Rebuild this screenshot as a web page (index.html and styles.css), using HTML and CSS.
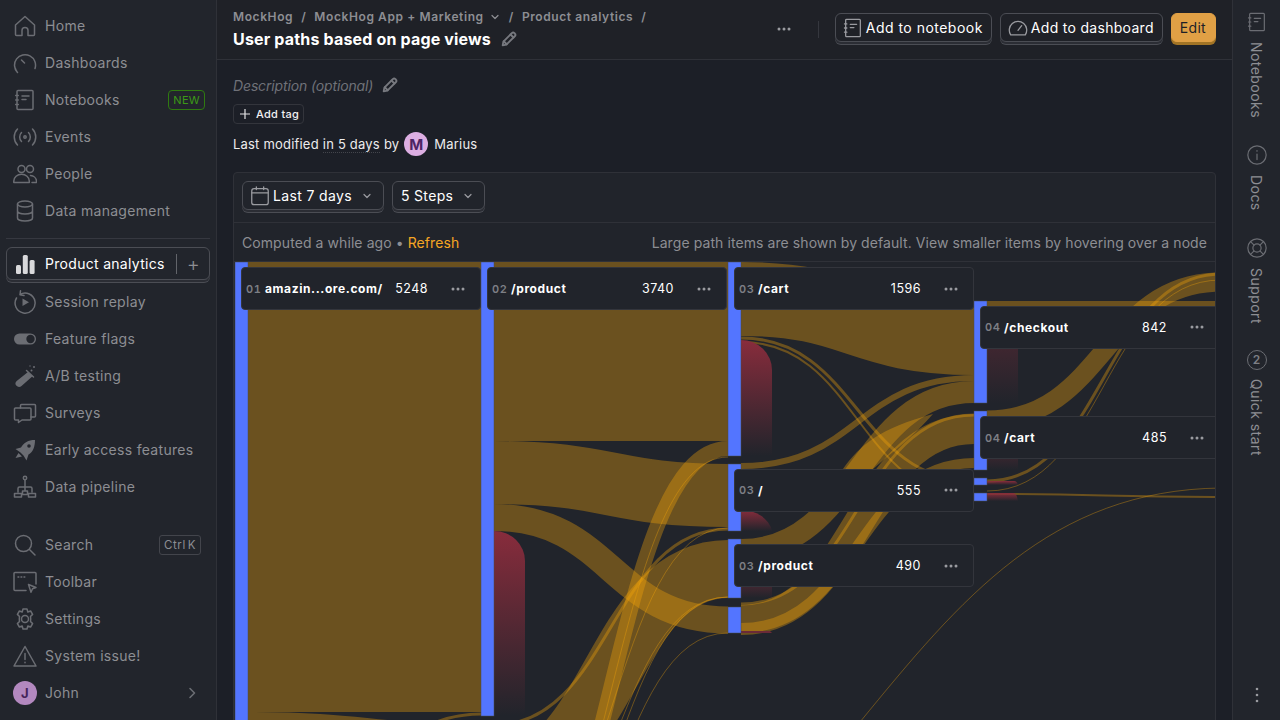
FILE: index.html
```html
<!DOCTYPE html>
<html lang="en">
  <head>
    <meta charset="UTF-8" />
    <title>User paths based on page views</title>
    <link rel="stylesheet" href="styles.css">
  </head>
  <body>
    <svg class="sprite" width="0" height="0">
      <symbol id="i-notebook" viewBox="0 0 24 24">
        <path d="M5 2.500h14a1 1 0 0 1 1 1v17a1 1 0 0 1-1 1H5a1 1 0 0 1-1-1v-17a1 1 0 0 1 1-1z" />
        <path d="M2.700 7.500h2.600M2.700 12h2.600M2.700 16.500h2.600M9 8h7M9 11.500h4" />
      </symbol>
      <symbol id="i-pencil" viewBox="0 0 24 24">
        <path d="M3.500 20.500l1-5L16 4a2 2 0 0 1 3 0l1 1a2 2 0 0 1 0 3L8.500 19.500z" />
        <path d="M14 6l4 4M5 15l4 4" />
      </symbol>
      <symbol id="i-dots" viewBox="0 0 14 14">
        <circle cx="2" cy="7" r="1.500" />
        <circle cx="7" cy="7" r="1.500" />
        <circle cx="12" cy="7" r="1.500" />
      </symbol>
      <symbol id="i-chevron" viewBox="0 0 12 12">
        <path d="M3 4.500 6 7.500 9 4.500" />
      </symbol>
    </svg>

    <div class="app">
      <aside class="sidebar">
        <nav class="nav-group">
          <a class="nav-item">
            <svg class="nav-icon" viewBox="0 0 24 24"><path d="M2.500 11 12 2.500l9.500 8.500v9.500a1 1 0 0 1-1 1H15v-5a3 3 0 0 0-6 0v5H3.500a1 1 0 0 1-1-1z" /></svg>
            <span>Home</span>
          </a>
          <a class="nav-item">
            <svg class="nav-icon" viewBox="0 0 24 24"><path d="M4.500 21.500A10.500 10.500 0 1 1 22 17.500M2.400 17.500a10.500 10.500 0 0 0 1.400 3M8.500 9l3 3" /></svg>
            <span>Dashboards</span>
          </a>
          <a class="nav-item">
            <svg class="nav-icon"><use href="#i-notebook" /></svg>
            <span>Notebooks</span>
            <span class="badge-new">NEW</span>
          </a>
          <a class="nav-item">
            <svg class="nav-icon" viewBox="0 0 24 24"><circle cx="12" cy="12" r="1.200" /><path d="M8.500 7.500a6.500 6.500 0 0 0 0 9M15.500 7.500a6.500 6.500 0 0 1 0 9M4.500 4a11.500 11.500 0 0 0 0 16M19.500 4a11.500 11.500 0 0 1 0 16" /></svg>
            <span>Events</span>
          </a>
          <a class="nav-item">
            <svg class="nav-icon" viewBox="0 0 24 24"><circle cx="8.500" cy="7" r="3.500" /><circle cx="17" cy="7" r="3.500" /><path d="M0.800 20.500v-1.500a7 6 0 0 1 15.500 0v1.500zM17.500 13.500a6.500 6 0 0 1 6 5.500v1.500H19" /></svg>
            <span>People</span>
          </a>
          <a class="nav-item">
            <svg class="nav-icon" viewBox="0 0 24 24"><ellipse cx="12" cy="5" rx="7.500" ry="3" /><path d="M4.500 5v14c0 1.700 3.400 3 7.500 3s7.500-1.300 7.500-3V5M4.500 12c0 1.700 3.400 3 7.500 3s7.500-1.300 7.500-3" /></svg>
            <span>Data management</span>
          </a>
        </nav>

        <div class="nav-divider"></div>

        <nav class="nav-group">
          <a class="nav-item nav-item-active">
            <svg class="nav-icon nav-icon-solid" viewBox="0 0 24 24"><rect x="3" y="13" width="5" height="9" rx="1.500" /><rect x="9.800" y="3" width="5" height="19" rx="1.500" /><rect x="16.600" y="8" width="5" height="14" rx="1.500" /></svg>
            <span>Product analytics</span>
            <span class="nav-add">+</span>
          </a>
          <a class="nav-item">
            <svg class="nav-icon" viewBox="0 0 24 24"><path d="M7 4.500A10 10 0 1 1 3.500 8M7.500 0.800 7 4.800l4 .7" /><path class="nav-fill" d="M9.500 8.500v7.500l6.500-3.800z" /></svg>
            <span>Session replay</span>
          </a>
          <a class="nav-item">
            <svg class="nav-icon" viewBox="0 0 24 24"><rect class="nav-fill" x="1" y="6.500" width="22" height="11" rx="5.500" /><circle class="nav-knob" cx="17.500" cy="12" r="4.200" /></svg>
            <span>Feature flags</span>
          </a>
          <a class="nav-item">
            <svg class="nav-icon" viewBox="0 0 24 24"><path class="nav-fill" d="M15 8l4.500 4.200L8.500 22a3.400 3.400 0 0 1-5-.2 3.400 3.400 0 0 1 .2-4.800z" /><path d="M13.500 6.500l7 6.500" /><circle class="nav-fill" cx="18.500" cy="6.500" r="1" /><circle class="nav-fill" cx="21" cy="3" r="1" /><circle class="nav-fill" cx="17" cy="2" r="0.700" /></svg>
            <span>A/B testing</span>
          </a>
          <a class="nav-item">
            <svg class="nav-icon" viewBox="0 0 24 24"><path d="M7.500 7V4.500a1 1 0 0 1 1-1h13a1 1 0 0 1 1 1V15a1 1 0 0 1-1 1H18" /><path d="M2.500 7h14.500a1 1 0 0 1 1 1v10a1 1 0 0 1-1 1H9l-3.500 2.500V19h-3a1 1 0 0 1-1-1V8a1 1 0 0 1 1-1z" /></svg>
            <span>Surveys</span>
          </a>
          <a class="nav-item">
            <svg class="nav-icon" viewBox="0 0 24 24"><path class="nav-fill" d="M22 2c-7 0-11 2.500-14 7.500l-5.500 1.500 5 3.500 3 3 3 5 2-6C20 14 22 9 22 2zM2.500 20l3-5 3.500 3.500z" /><circle class="nav-knob" cx="16" cy="8" r="1.800" /></svg>
            <span>Early access features</span>
          </a>
          <a class="nav-item">
            <svg class="nav-icon" viewBox="0 0 24 24"><circle cx="12" cy="3" r="1.700" /><path d="M12 4.700V12M5 17v-3.500a1.500 1.500 0 0 1 1.500-1.500h11a1.500 1.500 0 0 1 1.500 1.500V17M12 12v4M9.500 16h5v3.500h-5zM1.500 18.500h7V22h-7zM15.500 18.500h7V22h-7z" /></svg>
            <span>Data pipeline</span>
          </a>
        </nav>

        <nav class="nav-group nav-group-bottom">
          <a class="nav-item">
            <svg class="nav-icon" viewBox="0 0 24 24"><circle cx="10.500" cy="10.500" r="8" /><path d="M16.500 16.500 22 22" /></svg>
            <span>Search</span>
            <kbd class="kbd">Ctrl K</kbd>
          </a>
          <a class="nav-item">
            <svg class="nav-icon" viewBox="0 0 24 24"><path d="M13 20.500H2a1 1 0 0 1-1-1V3.500a1 1 0 0 1 1-1h20a1 1 0 0 1 1 1V14" /><path d="M5 7h.8M8 7h.8M11 7h.8" /><path d="M15.500 14.500l7.500 3-3.500 1.300-1.500 3.500z" /></svg>
            <span>Toolbar</span>
          </a>
          <a class="nav-item">
            <svg class="nav-icon" viewBox="0 0 24 24"><circle cx="12" cy="12" r="3.500" /><path d="M10 2h4l.8 3 2.800-1 2 3.400L17.500 9.500l.2 2.500-.2 2.500 2.100 2.100-2 3.400-2.800-1L14 22h-4l-.8-3-2.800 1-2-3.400 2.100-2.100-.2-2.500.2-2.500-2.100-2.100 2-3.400 2.800 1z" /></svg>
            <span>Settings</span>
          </a>
          <a class="nav-item">
            <svg class="nav-icon" viewBox="0 0 24 24"><path d="M12 2.500 23 22H1zM12 9.500v6M12 18.200v.6" /></svg>
            <span>System issue!</span>
          </a>
          <a class="nav-item">
            <span class="avatar avatar-john">J</span>
            <span>John</span>
            <svg class="nav-chevron" viewBox="0 0 12 12"><path d="M4 1.500 8.500 6 4 10.500" /></svg>
          </a>
        </nav>
      </aside>

      <main class="main">
        <header class="page-header">
          <div class="header-left">
            <div class="breadcrumbs">
              <span>MockHog</span>
              <span class="crumb-sep">/</span>
              <span>MockHog App + Marketing</span>
              <svg class="crumb-chevron"><use href="#i-chevron" /></svg>
              <span class="crumb-sep">/</span>
              <span>Product analytics</span>
              <span class="crumb-sep">/</span>
            </div>
            <h1 class="page-title">
              User paths based on page views
              <svg class="pencil"><use href="#i-pencil" /></svg>
            </h1>
          </div>
          <div class="header-actions">
            <svg class="dots header-dots"><use href="#i-dots" /></svg>
            <span class="header-divider"></span>
            <button class="btn btn-notebook">
              <svg class="btn-icon"><use href="#i-notebook" /></svg>
              Add to notebook
            </button>
            <button class="btn">
              <svg class="btn-icon" viewBox="0 0 24 24"><path d="M4 19.500a9.500 9.500 0 1 1 16 0zM12 14.500l4-5" /></svg>
              Add to dashboard
            </button>
            <button class="btn btn-primary">Edit</button>
          </div>
        </header>

        <section class="content">
          <p class="description">
            Description (optional)
            <svg class="pencil"><use href="#i-pencil" /></svg>
          </p>
          <button class="tag-btn">
            <svg class="tag-plus" viewBox="0 0 12 12"><path d="M6 1v10M1 6h10" /></svg>
            Add tag
          </button>
          <p class="modified">
            Last modified <span class="dotted">in 5 days</span> by
            <span class="avatar avatar-marius">M</span>
            <span class="modified-name">Marius</span>
          </p>

          <div class="card">
            <div class="filters">
              <button class="btn btn-filter">
                <svg class="btn-icon" viewBox="0 0 24 24"><rect x="3" y="4" width="18" height="17.500" rx="2.500" /><path d="M3 8.500h18M8 2v3M16 2v3" /></svg>
                Last 7 days
                <svg class="filter-chevron"><use href="#i-chevron" /></svg>
              </button>
              <button class="btn btn-filter btn-plain">
                5 Steps
                <svg class="filter-chevron"><use href="#i-chevron" /></svg>
              </button>
            </div>
            <div class="status-row">
              <span>Computed a while ago • <a class="refresh">Refresh</a></span>
              <span>Large path items are shown by default. View smaller items by hovering over a node</span>
            </div>

            <div class="chart">
              <svg class="paths" width="981" height="500" viewBox="234 262 981 500">
                <defs>
                  <linearGradient id="drop" x1="0" y1="0" x2="0" y2="1">
                    <stop offset="0" stop-color="#882c3c" />
                    <stop offset="1" stop-color="#882c3c" stop-opacity="0" />
                  </linearGradient>
                </defs>

                <!-- step 1 to 2 -->
                <path class="flow" stroke-width="450" d="M248,487H481" />
                <path class="flow" stroke-width="100" d="M248,762C364.500,762 364.500,774 481,774" />
                <path class="flow" stroke-width="3" d="M248,850C364.500,850 364.500,714 481,714" />

                <!-- step 2 to 3 -->
                <path class="flow" stroke-width="179" d="M494,351.500H728" />
                <path class="flow" stroke-width="63" d="M494,472.500C611,472.500 611,495.500 728,495.500" />
                <path class="flow" stroke-width="27" d="M494,517.500C611,517.500 611,620 728,620" />
                <path class="flow" stroke-width="58" d="M494,777C611,777 611,569 728,569" />
                <path class="flow" stroke-width="15" d="M494,925C611,925 611,448.500 728,448.500" />
                <path class="flow" stroke-width="3" d="M494,725C611,725 611,529 728,529" />
                <path class="flow" stroke-width="1" d="M494,890C611,890 611,528 728,528" />
                <path class="flow" stroke-width="1" d="M494,897C611,897 611,597 728,597" />
                <path class="flow" stroke-width="1" d="M494,932C611,932 611,597 728,597" />
                <path class="flow" stroke-width="1" d="M494,941C611,941 611,633 728,633" />
                <path class="flow" stroke-width="1" d="M494,925C611,925 611,457 728,457" />

                <!-- step 3 to 4 -->
                <path class="flow" stroke-width="74" d="M741,299C857.500,299 857.500,338 974,338" />
                <path class="flow" stroke-width="3" d="M741,338C857.500,338 857.500,481 974,481" />
                <path class="flow" stroke-width="2" d="M741,342C857.500,342 857.500,497 974,497" />
                <path class="flow" stroke-width="6" d="M741,466C857.500,466 857.500,378 974,378" />
                <path class="flow" stroke-width="22" d="M741,550C857.500,550 857.500,392 974,392" />
                <path class="flow-fill" d="M843,469C860,445 880,428 933,414C915,435 895,450 873,469Z" />
                <path class="flow" stroke-width="30" d="M741,620C857.500,620 857.500,429 974,429" />
                <path class="flow" stroke-width="3" d="M741,604C857.500,604 857.500,415 974,415" />
                <path class="flow" stroke-width="10" d="M741,628C857.500,628 857.500,463 974,463" />

                <!-- step 4 to 5 -->
                <path class="flow" stroke-width="5" d="M987,303.500H1216" />
                <path class="flow" stroke-width="19" d="M987,420C1104,420 1104,282 1221,282" />
                <path class="flow" stroke-width="3" d="M987,481C1104,481 1104,274 1221,274" />
                <path class="flow" stroke-width="1" d="M987,491C1104,491 1104,280 1221,280" />
                <path class="flow" stroke-width="2" d="M987,494C1104,494 1104,497 1216,497" />
                <path class="flow" stroke-width="1" d="M860,722C960,600 1050,490 1221,488" />

                <!-- drop-off -->
                <path class="drop" d="M494,531a31,30 0 0 1 31,30V716H494Z" />
                <path class="drop" d="M741,340a31,30 0 0 1 31,30V456H741Z" />
                <path class="drop" d="M741,510a31,26 0 0 1 31,21H741Z" />
                <path class="drop" d="M741,560a31,20 0 0 1 31,20V598H741Z" />
                <path class="drop-tip" d="M741,631H770L772,633H741Z" />
                <path class="drop drop-dim" d="M987,307H1018V403H987Z" />
                <path class="drop drop-dim" d="M987,440H1018V470H987Z" />
                <path class="drop" d="M987,481H1014Q1017,481 1018,485H987Z" />
                <path class="drop" d="M987,493H1013Q1017,493 1018,501H987Z" />

                <!-- step bars -->
                <rect class="bar" x="235" y="262" width="13" height="500" />
                <rect class="bar" x="481" y="262" width="13" height="454" />
                <rect class="bar" x="728" y="262" width="13" height="194" />
                <rect class="bar" x="728" y="464" width="13" height="67" />
                <rect class="bar" x="728" y="539" width="13" height="59" />
                <rect class="bar" x="728" y="607" width="13" height="26" />
                <rect class="bar" x="974" y="301" width="13" height="102" />
                <rect class="bar" x="974" y="411" width="13" height="59" />
                <rect class="bar" x="974" y="478" width="13" height="7" />
                <rect class="bar" x="974" y="493" width="13" height="8" />
              </svg>

              <div class="node node-a">
                <span class="node-step">01</span><span class="node-label">amazin...ore.com/</span>
                <span class="node-count">5248</span><svg class="dots node-dots"><use href="#i-dots" /></svg>
              </div>
              <div class="node node-b">
                <span class="node-step">02</span><span class="node-label">/product</span>
                <span class="node-count">3740</span><svg class="dots node-dots"><use href="#i-dots" /></svg>
              </div>
              <div class="node node-c">
                <span class="node-step">03</span><span class="node-label">/cart</span>
                <span class="node-count">1596</span><svg class="dots node-dots"><use href="#i-dots" /></svg>
              </div>
              <div class="node node-d">
                <span class="node-step">03</span><span class="node-label">/</span>
                <span class="node-count">555</span><svg class="dots node-dots"><use href="#i-dots" /></svg>
              </div>
              <div class="node node-e">
                <span class="node-step">03</span><span class="node-label">/product</span>
                <span class="node-count">490</span><svg class="dots node-dots"><use href="#i-dots" /></svg>
              </div>
              <div class="node node-f">
                <span class="node-step">04</span><span class="node-label">/checkout</span>
                <span class="node-count">842</span><svg class="dots node-dots"><use href="#i-dots" /></svg>
              </div>
              <div class="node node-g">
                <span class="node-step">04</span><span class="node-label">/cart</span>
                <span class="node-count">485</span><svg class="dots node-dots"><use href="#i-dots" /></svg>
              </div>
            </div>
          </div>
        </section>
      </main>

      <aside class="rail">
        <div class="rail-item">
          <svg class="rail-icon"><use href="#i-notebook" /></svg>
          <span class="rail-text">Notebooks</span>
        </div>
        <div class="rail-item">
          <svg class="rail-icon" viewBox="0 0 24 24"><circle cx="12" cy="12" r="10" /><path d="M12 11v6M12 7.200v.6" /></svg>
          <span class="rail-text">Docs</span>
        </div>
        <div class="rail-item">
          <svg class="rail-icon" viewBox="0 0 24 24"><circle cx="12" cy="12" r="10" /><circle cx="12" cy="12" r="4.500" /><path d="M5 5l3.800 3.800M19 5l-3.800 3.800M5 19l3.800-3.800M19 19l-3.800-3.800" /></svg>
          <span class="rail-text">Support</span>
        </div>
        <div class="rail-item">
          <span class="rail-count">2</span>
          <span class="rail-text">Quick start</span>
        </div>
        <svg class="rail-more" viewBox="0 0 4 16"><circle cx="2" cy="2" r="1.300" /><circle cx="2" cy="8" r="1.300" /><circle cx="2" cy="14" r="1.300" /></svg>
      </aside>
    </div>
  </body>
</html>
```

FILE: styles.css
```css
* {
  box-sizing: border-box;
}

html,
body {
  height: 720px;
  margin: 0;
  overflow: hidden;
}

body {
  font-family: Inter, "Noto Sans", sans-serif;
  background: #1c1f27;
  color: #fff;
}

p,
h1 {
  margin: 0;
}

button {
  font-family: inherit;
  cursor: pointer;
}

.sprite {
  position: absolute;
}

symbol path {
  fill: none;
  stroke-linecap: round;
  stroke-linejoin: round;
}

.app {
  display: grid;
  grid-template-columns: 217px 1fr 48px;
  height: 720px;
}

/* sidebar */
.sidebar {
  background: #22252c;
  border-right: 1px solid #2f3138;
  padding: 7px 6px 0;
}

.nav-group-bottom {
  margin-top: 21px;
}

.nav-item {
  display: flex;
  align-items: center;
  height: 37px;
  padding: 0 5px 0 7px;
  gap: 8px;
  color: #8d8e93;
  font-size: 14px;
  letter-spacing: 0.3px;
}

.nav-icon {
  flex: none;
  width: 24px;
  height: 24px;
  fill: none;
  stroke: #6b6d73;
  stroke-width: 1.5;
  stroke-linecap: round;
  stroke-linejoin: round;
}

.nav-fill {
  fill: #6b6d73;
  stroke: none;
}

.nav-knob {
  fill: #22252c;
  stroke: none;
}

.nav-icon-solid {
  fill: #d9d9db;
  stroke: none;
}

.nav-divider {
  height: 1px;
  margin: 9px 0 8px;
  background: #363840;
}

.nav-item-active {
  height: 33px;
  margin-bottom: 3px;
  border: 1px solid #4b4d54;
  border-radius: 6px;
  box-shadow: 0 2px 0 #2b2d34, 0 3px 0 #4b4d54;
  color: #fff;
  padding-left: 6px;
}

.nav-add {
  margin-left: auto;
  padding-left: 10px;
  margin-right: 4px;
  border-left: 1px solid #62646a;
  color: #8d8e93;
  font-size: 20px;
  font-weight: 300;
  line-height: 20px;
}

.badge-new {
  margin-left: auto;
  padding: 0 4px;
  border: 1px solid #2f7a10;
  border-radius: 4px;
  color: #3c9a16;
  font-size: 11px;
  line-height: 18px;
}

.kbd {
  margin-left: auto;
  margin-right: 4px;
  padding: 0 4px;
  border: 1px solid #43454c;
  border-radius: 3px;
  color: #8d8e93;
  font-family: inherit;
  font-size: 11.500px;
  letter-spacing: 0.6px;
  word-spacing: -2px;
  line-height: 18px;
}

.avatar {
  display: flex;
  flex: none;
  align-items: center;
  justify-content: center;
  width: 24px;
  height: 24px;
  border-radius: 50%;
  font-weight: 700;
}

.avatar-john {
  background: #b388bf;
  color: #45245a;
  font-size: 13px;
}

.avatar-marius {
  margin-left: 1px;
  background: #dcaee2;
  color: #4d2465;
  font-size: 15px;
}

.nav-chevron {
  width: 12px;
  height: 12px;
  margin-left: auto;
  margin-right: 7px;
  fill: none;
  stroke: #6b6d73;
  stroke-width: 1.600;
  stroke-linecap: round;
  stroke-linejoin: round;
}

/* page header */
.main {
  min-width: 0;
  overflow: hidden;
}

.page-header {
  display: flex;
  align-items: center;
  justify-content: space-between;
  height: 60px;
  padding: 0 16px;
  background: #1f2127;
  border-bottom: 1px solid #2f3138;
}

.breadcrumbs {
  display: flex;
  align-items: center;
  gap: 8px;
  color: #8d8e93;
  font-size: 12px;
  font-weight: 600;
  letter-spacing: 0.6px;
}

.crumb-chevron {
  width: 12px;
  height: 12px;
  margin-left: -3px;
  fill: none;
  stroke: #8d8e93;
  stroke-width: 1.200;
}

.page-title {
  display: flex;
  align-items: center;
  gap: 9px;
  margin-top: 4px;
  font-size: 16px;
  font-weight: 700;
  letter-spacing: 0.17px;
  line-height: 22px;
}

.pencil {
  width: 18px;
  height: 18px;
  fill: none;
  stroke: #77797f;
  stroke-width: 2.400;
}

.header-actions {
  display: flex;
  align-items: center;
  gap: 8px;
  margin-top: -1px;
}

.dots {
  fill: #9a9ba0;
}

.header-dots {
  width: 14px;
  height: 14px;
}

.header-divider {
  width: 1px;
  height: 17px;
  margin: 0 8px 0 19px;
  background: #35373e;
}

.btn {
  display: flex;
  align-items: center;
  gap: 2px;
  height: 29px;
  margin-bottom: 3px;
  padding: 0 8px 0 6px;
  background: #1f2127;
  border: 1px solid #4b4d54;
  border-radius: 6px;
  box-shadow: 0 2px 0 #2b2d34, 0 3px 0 #4b4d54;
  color: #fff;
  font-size: 14px;
  letter-spacing: 0.3px;
}

.btn-notebook {
  letter-spacing: 0.48px;
}

.btn-icon {
  width: 22px;
  height: 22px;
  fill: none;
  stroke: #9a9ba0;
  stroke-width: 1.400;
  stroke-linecap: round;
  stroke-linejoin: round;
}

.btn-primary {
  padding: 0 9px 0 8px;
  background: #e0a045;
  border-color: #e0a045;
  box-shadow: 0 3px 0 #a27425;
  color: #1d1f27;
}

/* insight meta */
.content {
  padding: 16px 16px 0;
}

.description {
  display: flex;
  align-items: center;
  gap: 8px;
  height: 20px;
  margin-top: -1px;
  color: #6f7178;
  font-size: 14px;
  font-style: italic;
  letter-spacing: -0.14px;
}

.tag-btn {
  display: flex;
  align-items: center;
  gap: 5px;
  height: 20px;
  margin-top: 9px;
  padding: 0 4px 0 5px;
  background: none;
  border: 1px solid #33353c;
  border-radius: 4px;
  color: #f0f0f1;
  font-size: 11px;
  font-weight: 500;
  letter-spacing: 0.3px;
}

.tag-plus {
  width: 12px;
  height: 12px;
  fill: none;
  stroke: #e4e4e6;
  stroke-width: 1.200;
}

.modified {
  display: flex;
  align-items: center;
  gap: 4px;
  height: 24px;
  margin-top: 8px;
  color: #ececed;
  font-size: 13px;
  letter-spacing: 0.2px;
}

.dotted {
  border-bottom: 1px dotted #43454c;
}

.modified-name {
  margin-left: 2px;
}

/* chart card */
.card {
  margin-top: 16px;
  background: #21242b;
  border: 1px solid #2f3138;
  border-radius: 4px;
  overflow: hidden;
}

.filters {
  display: flex;
  gap: 8px;
  height: 50px;
  padding: 8px;
  border-bottom: 1px solid #2f3138;
}

.btn-filter {
  background: #21242b;
  letter-spacing: 0.35px;
}

.btn-plain {
  padding-left: 8px;
}

.filter-chevron {
  width: 12px;
  height: 12px;
  margin: 0 2px 0 7px;
  fill: none;
  stroke: #9a9ba0;
  stroke-width: 1.200;
}

.status-row {
  display: flex;
  align-items: center;
  justify-content: space-between;
  height: 39px;
  padding: 0 8px;
  border-bottom: 1px solid #2f3138;
  color: #8d8e93;
  font-size: 14px;
  letter-spacing: 0.08px;
}

.refresh {
  color: #f5a623;
}

.chart {
  position: relative;
  height: 500px;
  overflow: hidden;
}

.paths {
  display: block;
}

.flow {
  fill: none;
  stroke: rgba(245, 165, 10, 0.35);
}

.flow-fill {
  fill: rgba(245, 165, 10, 0.35);
}

.drop {
  fill: url(#drop);
}

.drop-dim {
  opacity: 0.5;
}

.drop-tip {
  fill: #6b2a38;
}

.bar {
  fill: #5375ff;
  stroke: #4a4c50;
  stroke-width: 0.500;
}

/* nodes of the diagram */
.node {
  position: absolute;
  display: flex;
  align-items: center;
  width: 240px;
  height: 43px;
  padding-left: 4px;
  background: #21242b;
  border: 1px solid #33353c;
  border-radius: 4px;
}

.node-a { left: 7px; top: 5px; }
.node-b { left: 253px; top: 5px; }
.node-c { left: 500px; top: 5px; }
.node-d { left: 500px; top: 207px; padding-bottom: 1px; }
.node-e { left: 500px; top: 282px; }
.node-f { left: 746px; top: 44px; padding-bottom: 1px; }
.node-g { left: 746px; top: 154px; }

.node-step {
  flex: none;
  width: 19px;
  color: #7d7f85;
  font-size: 11px;
  font-weight: 600;
  font-variant-numeric: tabular-nums;
  letter-spacing: 0.6px;
}

.node-label {
  color: #fff;
  font-size: 12px;
  font-weight: 700;
  letter-spacing: 0.6px;
}

.node-count {
  margin-left: auto;
  font-size: 12.500px;
  letter-spacing: 0.5px;
}

.node-dots {
  width: 14px;
  height: 14px;
  margin: 0 15px 0 23px;
}

/* right rail */
.rail {
  position: relative;
  display: flex;
  flex-direction: column;
  align-items: center;
  padding-top: 11px;
  background: #22252c;
  border-left: 1px solid #2f3138;
}

.rail-item {
  display: flex;
  flex-direction: column;
  align-items: center;
  gap: 9px;
  margin-bottom: 26px;
}

.rail-icon {
  width: 22px;
  height: 22px;
  fill: none;
  stroke: #6b6d73;
  stroke-width: 1.300;
  stroke-linecap: round;
  stroke-linejoin: round;
}

.rail-count {
  display: flex;
  align-items: center;
  justify-content: center;
  width: 20px;
  height: 20px;
  border: 1px solid #6b6d73;
  border-radius: 50%;
  color: #7d7f85;
  font-size: 12px;
  font-weight: 600;
}

.rail-text {
  writing-mode: vertical-rl;
  color: #8d8e93;
  font-size: 14px;
  letter-spacing: 0.45px;
}

.rail-more {
  position: absolute;
  left: 22px;
  bottom: 17px;
  width: 4px;
  height: 16px;
  fill: #9a9ba0;
}
```
